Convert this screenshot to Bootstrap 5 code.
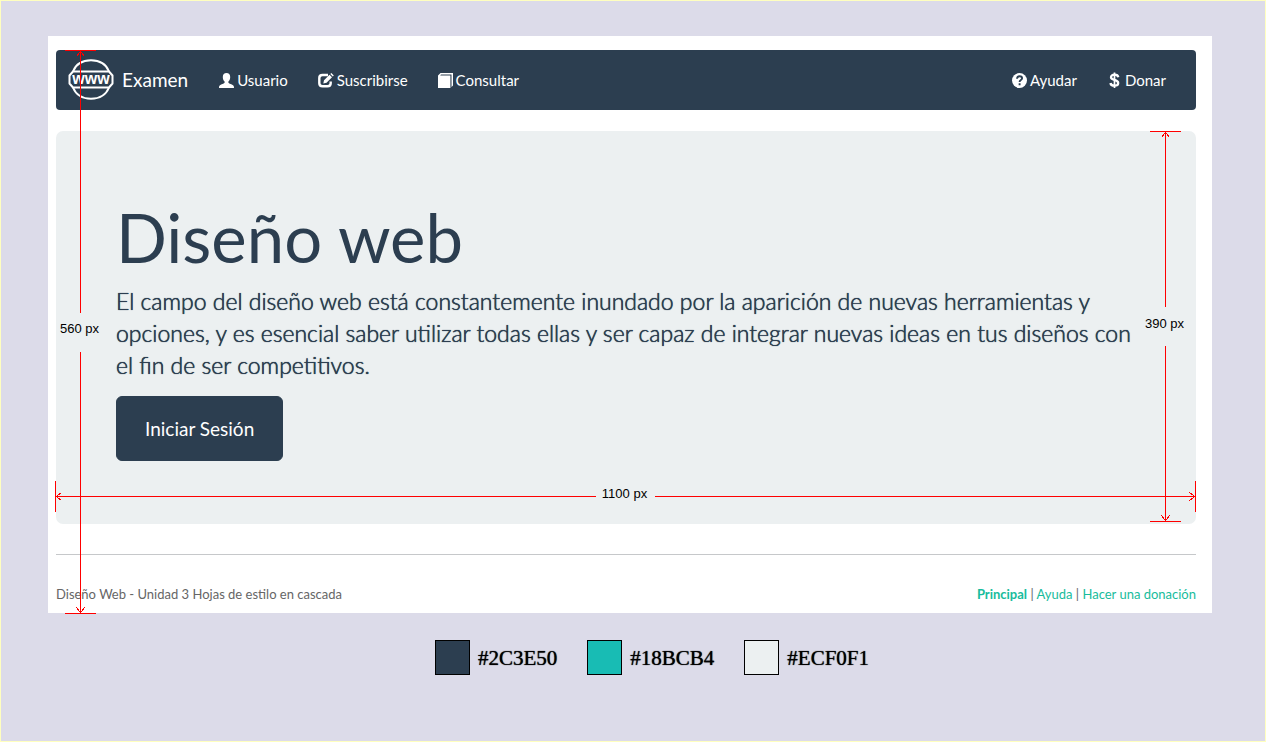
<!DOCTYPE html>
<html lang="es">
<head>
<meta charset="utf-8">
<meta name="viewport" content="width=device-width, initial-scale=1">
<title>Examen - Diseño web</title>
<link href="https://cdn.jsdelivr.net/npm/bootstrap@5.3.0/dist/css/bootstrap.min.css" rel="stylesheet">
<style>
  :root { --ink: #2c3e50; --mist: #ecf0f1; --teal: #18bcb4; --rule: #ff0000; }
  body { font-family: Lato, sans-serif; font-size: 15px; background: #dcdbe9; border: 1px solid #ffffbf; min-height: 100vh; }
  .sheet { background: #fff; margin: 35px 53px 0 47px; padding: 14px 16px 9px 8px; }
  .site-nav { background: var(--ink); border-radius: 4px; min-height: 60px; padding: 0 15px 0 12px; margin-bottom: 21px; }
  .site-nav .navbar-brand { font-size: 19px; line-height: 20px; gap: 8px; margin-right: 16px; padding: 0; color: #fff; }
  .site-nav .navbar-nav .nav-link { display: flex; align-items: center; gap: 3px; padding: 20px 15px; line-height: 20px; color: #fff; }
  .hero { background: var(--mist); color: var(--ink); border-radius: 7px; padding: 68px 60px 63px; }
  .hero h1 { font-size: 67px; font-weight: 400; line-height: 76px; margin-bottom: 10px; }
  .hero p { font-size: 23px; font-weight: 300; line-height: 32px; margin-bottom: 15px; text-shadow: 0 0 0 var(--ink), 0 0 1px var(--ink); }
  .btn-session { font-size: 19px; line-height: 25px; padding: 19px 28px; border-radius: 6px; background: var(--ink); border-color: var(--ink); color: #fff; }
  .btn-session:hover { background: #1e2b37; color: #fff; }
  .divider { margin: 30px 0; border-top: 1px solid #c6c8ca; opacity: 1; }
  .site-foot { font-size: 13px; line-height: 19px; color: #666; }
  .site-foot a { color: #18bc9c; text-decoration: none; }
  .site-foot a:hover { text-decoration: underline; }

  /* dimension lines laid over the page */
  .ruler { position: absolute; display: flex; align-items: center; pointer-events: none; font: 13px/16px "Liberation Sans", sans-serif; color: #000; white-space: nowrap; }
  .ruler svg { flex: none; display: block; fill: none; stroke: var(--rule); shape-rendering: crispEdges; }
  .ruler i { flex: 1 1 0; background: var(--rule); }
  .ruler span { display: flex; align-items: center; justify-content: center; flex: none; padding: 0 2px 6px 0; }
  .ruler-v { flex-direction: column; width: 31px; }
  .ruler-v i { width: 1px; }
  .ruler-v span { height: 39px; }
  .ruler-h { height: 31px; left: -1px; right: 0; bottom: 12px; }
  .ruler-h i { height: 1px; }
  .ruler-h span { width: 59px; }
  .ruler-page { top: 14px; bottom: -1px; left: 17px; z-index: 2; }
  .ruler-hero { top: 0; bottom: 2px; right: 15px; }

  .palette { margin-top: 27px; padding-left: 38px; gap: 30px; font: 21px/24px "Liberation Serif", serif; color: #000; text-shadow: 0 0 1px #000; }
  .swatch { width: 35px; height: 35px; border: 1px solid #000; }
</style>
</head>
<body>
<div class="sheet position-relative">
  <nav class="site-nav navbar navbar-expand" aria-label="Principal">
    <a class="navbar-brand d-flex align-items-center" href="#">
      <svg width="46" height="42" viewBox="0 0 46 42" fill="none" stroke="#fff" stroke-width="2" aria-hidden="true">
        <path d="M5 12.500C8 5 14.500 1.300 23 1.300S38 5 41 12.500M5 28.500C8 36 14.500 39.700 23 39.700S38 36 41 28.500"/>
        <path d="M5 12.500H41L44.500 16.500V24.500L41 28.500H5L1.500 24.500V16.500Z" stroke-linejoin="round"/>
        <text x="23" y="25" text-anchor="middle" fill="#fff" stroke="none" font-family="Liberation Sans, sans-serif" font-weight="700" font-size="16">www</text>
      </svg>Examen</a>
    <ul class="navbar-nav">
      <li class="nav-item"><a class="nav-link" href="#">
        <svg width="15" height="15" viewBox="0 0 15 15" fill="#fff" aria-hidden="true"><path d="M7.500 0C9.800 0 11.200 1.500 11.200 3.900C11.200 6 10.500 7.600 9.400 8.600V9.700C10.300 10.600 12.700 11.300 14 12.200C14.800 12.800 15 13.500 15 15H0C0 13.500.2 12.800 1 12.200C2.300 11.300 4.700 10.600 5.600 9.700V8.600C4.500 7.600 3.800 6 3.800 3.900C3.800 1.500 5.200 0 7.500 0Z"/></svg>Usuario</a></li>
      <li class="nav-item"><a class="nav-link" href="#">
        <svg width="16" height="15" viewBox="0 0 16 15" aria-hidden="true"><path d="M10 2H4.500Q1.300 2 1.300 5V10.300Q1.300 13.300 4.500 13.300H9.500Q12.700 13.300 12.700 10.300V8.500" fill="none" stroke="#fff" stroke-width="2.400"/><path d="M5.300 10.500L6 7.300L11.500 1.800L14 4.300L8.500 9.800ZM12.300 1L13.300 0L15.800 2.500L14.800 3.500Z" fill="#fff"/></svg>Suscribirse</a></li>
      <li class="nav-item"><a class="nav-link" href="#">
        <svg width="15" height="15" viewBox="0 0 15 15" aria-hidden="true"><path d="M0 2.500L2.500 0H15V12.500L13.500 14V1.500H3L2.200 2.400H12.400V15H0Z" fill="#fff"/></svg>Consultar</a></li>
    </ul>
    <ul class="navbar-nav ms-auto">
      <li class="nav-item"><a class="nav-link" href="#">
        <svg width="15" height="15" viewBox="0 0 15 15" aria-hidden="true"><circle cx="7.500" cy="7.500" r="7.500" fill="#fff"/><path d="M5 5.800C5 4 6 3.200 7.600 3.200C9.200 3.200 10.100 4.100 10.100 5.300C10.100 7.200 7.600 6.900 7.600 9M7.600 10.200V12.200" fill="none" stroke="#2c3e50" stroke-width="1.900"/></svg>Ayudar</a></li>
      <li class="nav-item"><a class="nav-link" href="#">
        <svg width="15" height="17" viewBox="0 0 15 17" fill="none" stroke="#fff" aria-hidden="true"><path d="M11.300 5.200C11 3.500 9.600 2.700 7.500 2.700C5.400 2.700 4 3.700 4 5.300C4 8.700 11.200 7 11.200 11C11.200 12.800 9.700 13.700 7.500 13.700C5.200 13.700 3.700 12.800 3.500 11" stroke-width="2.300"/><path d="M7.500.5V16" stroke-width="1.700"/></svg>Donar</a></li>
    </ul>
  </nav>

  <main class="hero position-relative">
    <h1>Diseño web</h1>
    <p>El campo del diseño web está constantemente inundado por la aparición de nuevas herramientas y opciones, y es esencial saber utilizar todas ellas y ser capaz de integrar nuevas ideas en tus diseños con el fin de ser competitivos.</p>
    <button type="button" class="btn btn-session d-block">Iniciar Sesión</button>

    <div class="ruler ruler-v ruler-hero">
      <svg width="31" height="7"><path d="M0 .5H31M15.500 0V7M15.500 1L11.500 6.500M15.500 1L19.500 6.500"/></svg><i></i><span>390 px</span><i></i>
      <svg width="31" height="7"><path d="M0 6.500H31M15.500 0V7M15.500 6L11.500 .5M15.500 6L19.500 .5"/></svg>
    </div>
    <div class="ruler ruler-h">
      <svg width="7" height="31"><path d="M.5 0V31M0 15.500H7M1 15.500L6.500 11.500M1 15.500L6.500 19.500"/></svg><i></i><span>1100 px</span><i></i>
      <svg width="7" height="31"><path d="M6.500 0V31M0 15.500H7M6 15.500L.5 11.500M6 15.500L.5 19.500"/></svg>
    </div>
  </main>

  <hr class="divider">
  <footer class="site-foot d-flex flex-wrap justify-content-between">
    <span>Diseño Web - Unidad 3 Hojas de estilo en cascada</span>
    <span><a class="fw-bold" href="#">Principal</a> | <a href="#">Ayuda</a> | <a href="#">Hacer una donación</a></span>
  </footer>

  <div class="ruler ruler-v ruler-page">
    <svg width="31" height="7"><path d="M0 .5H31M15.500 0V7M15.500 1L11.500 6.500M15.500 1L19.500 6.500"/></svg><i></i><span>560 px</span><i></i>
    <svg width="31" height="7"><path d="M0 6.500H31M15.500 0V7M15.500 6L11.500 .5M15.500 6L19.500 .5"/></svg>
  </div>
</div>

<div class="palette d-flex flex-wrap justify-content-center">
  <div class="d-flex align-items-center gap-2"><div class="swatch" style="background:#2c3e50"></div>#2C3E50</div>
  <div class="d-flex align-items-center gap-2"><div class="swatch" style="background:#18bcb4"></div>#18BCB4</div>
  <div class="d-flex align-items-center gap-2"><div class="swatch" style="background:#ecf0f1"></div>#ECF0F1</div>
</div>
<script src="https://cdn.jsdelivr.net/npm/bootstrap@5.3.0/dist/js/bootstrap.bundle.min.js"></script>
</body>
</html>
